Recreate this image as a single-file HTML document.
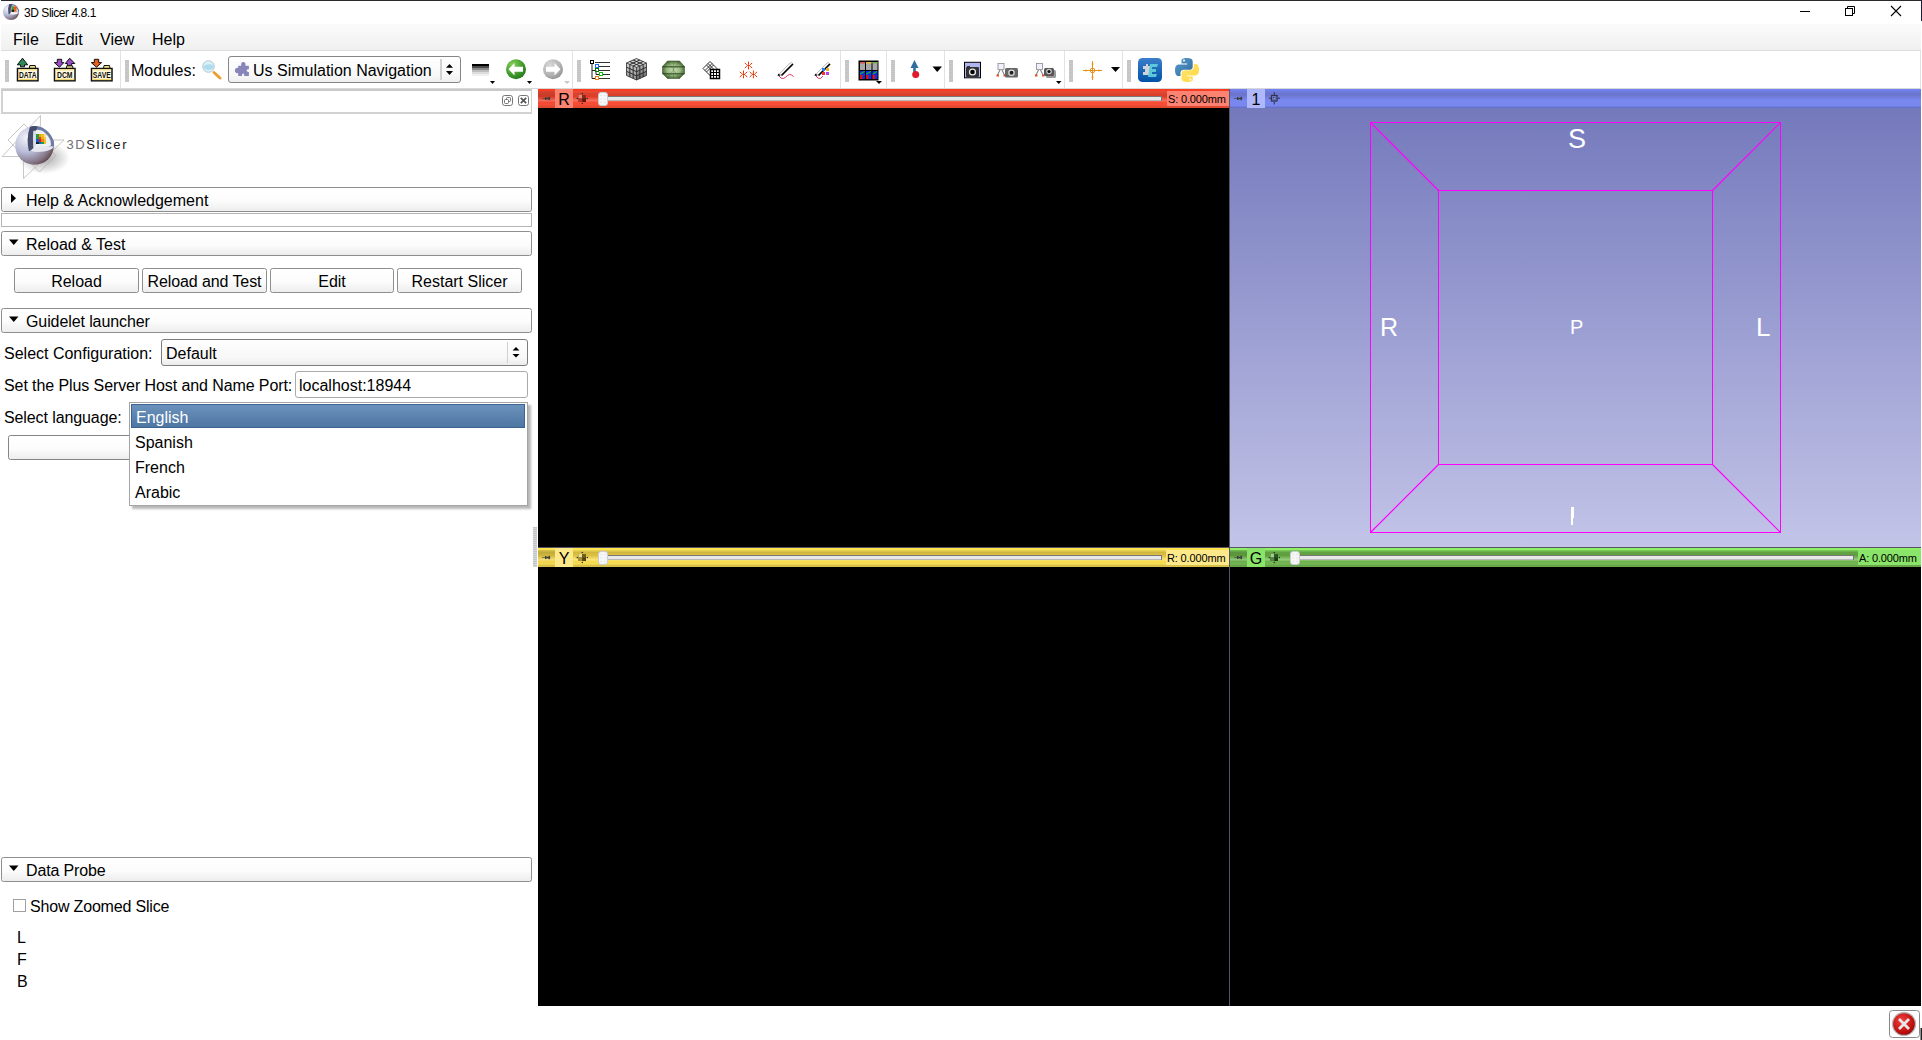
<!DOCTYPE html>
<html><head><meta charset="utf-8">
<style>
*{box-sizing:border-box;margin:0;padding:0}
html,body{width:1922px;height:1040px;overflow:hidden;background:#fff;font-family:"Liberation Sans",sans-serif;color:#000}
.a{position:absolute}
.t{position:absolute;white-space:pre;font-size:16px;line-height:22px}
#titlebar{left:1px;top:0;width:1921px;height:24px;background:#fff;border-top:1px solid #2a2a2a}
#menubar{left:1px;top:24px;width:1920px;height:27px;background:linear-gradient(#fbfbfb,#f0f0f0);border-bottom:1px solid #dcdcdc}
#toolbar{left:1px;top:51px;width:1920px;height:38px;background:#fff;border-bottom:1px solid #d8d8d8;border-right:1px solid #e2e2e2}
.sep{position:absolute;top:51px;width:1px;height:37px;background:#e3e3e3}
.grip{position:absolute;top:60px;width:4px;height:22px;background:repeating-linear-gradient(#c4c4c4 0 1px,#d4d4d4 1px 2px)}
.ctk{position:absolute;left:1px;width:531px;border:1px solid #8e8e8e;border-radius:2.5px;background:linear-gradient(#ffffff,#fcfcfc 55%,#ededed)}
.ctk .t{left:24px;top:1px}
.btn{position:absolute;border:1px solid #8e8e8e;border-radius:2.5px;background:linear-gradient(#ffffff,#fcfcfc 55%,#ededed);text-align:center}
.bar{position:absolute;height:19px}
.lbl{position:absolute;top:0;height:19px;font-size:16px;line-height:19px;text-align:center}
.mm{position:absolute;top:1px;height:17px;font-size:11px;line-height:17px;padding:0 2px;white-space:pre}
.view{position:absolute;background:#000}
.ax{position:absolute;color:#fff;white-space:pre;line-height:1}
</style></head><body>

<!-- Title bar -->
<div id="titlebar" class="a"></div>
<div class="a" style="left:1921px;top:0;width:1px;height:21px;background:#1b1f3a"></div>
<div class="t" style="left:24px;top:5px;font-size:12px;line-height:16px;letter-spacing:-0.45px;color:#000">3D Slicer 4.8.1</div>
<svg class="a" style="left:0;top:1px" width="24" height="23" viewBox="0 1 24 23">
 <defs><radialGradient id="tsph" cx="0.3" cy="0.3" r="0.85"><stop offset="0" stop-color="#f4f4fa"/><stop offset="0.45" stop-color="#b8bcd8"/><stop offset="0.8" stop-color="#807080"/><stop offset="1" stop-color="#502828"/></radialGradient></defs>
 <g transform="translate(11 12) scale(0.415) translate(-34.5 -145.5)">
 <circle cx="34.5" cy="145.5" r="19.3" fill="url(#tsph)"/>
 <path d="M30 127 Q44 122 53.8 141 L54 147.5 Q40 152.5 29 151 Q26 139 30 127 Z" fill="#6c7ca4"/>
 <path d="M34 130.5 Q44 127 50.5 140.5 L51 145.5 Q40 149 33 148 Q31 139 34 130.5 Z" fill="#eef0f4"/>
 <path d="M30 127 Q34 125 37.5 126.8 Q32.5 138 33.5 150.5 L29 151 Q26 139 30 127 Z" fill="#454c6c"/>
 <rect x="36" y="132" width="12" height="13" fill="#e07020"/>
 <rect x="36" y="132" width="5" height="13" fill="#30a050"/>
 <rect x="36" y="140" width="6" height="5" fill="#101820"/>
 <rect x="42" y="133" width="5" height="5" fill="#f05010"/>
 <path d="M33.5 148 Q42 145 53.8 146.5 Q52 150 44 151.5 Q36 152.5 30 151 Z" fill="#f0f0f6"/>
 </g>
</svg>
<svg class="a" style="left:1795px;top:0" width="120" height="22" viewBox="1795 0 120 22">
 <rect x="1800" y="11" width="10" height="1" fill="#000"/>
 <rect x="1845.5" y="8.5" width="7" height="7" fill="none" stroke="#000" stroke-width="1"/>
 <path d="M1847.5 8.5 V6.5 H1854.5 V13.5 H1852.5" fill="none" stroke="#000" stroke-width="1"/>
 <path d="M1891 6 L1901 16 M1901 6 L1891 16" stroke="#000" stroke-width="1.1"/>
</svg>

<!-- Menu bar -->
<div id="menubar" class="a"></div>
<div class="t" style="left:13px;top:29px">File</div>
<div class="t" style="left:55px;top:29px">Edit</div>
<div class="t" style="left:100px;top:29px">View</div>
<div class="t" style="left:152px;top:29px">Help</div>

<!-- Toolbar -->
<div id="toolbar" class="a"></div>
<svg class="a" style="left:0;top:51px" width="1922" height="38" viewBox="0 51 1922 38">
<defs>
 <linearGradient id="grip" x1="0" y1="0" x2="0" y2="1"><stop offset="0" stop-color="#c8c8c8"/><stop offset="1" stop-color="#c8c8c8"/></linearGradient>
 <pattern id="gp" width="4" height="2" patternUnits="userSpaceOnUse"><rect width="4" height="2" fill="#cbcbcb"/><rect width="4" height="1" fill="#c2c2c2"/></pattern>
 <radialGradient id="gback" cx="0.35" cy="0.3" r="0.8"><stop offset="0" stop-color="#8fd35a"/><stop offset="0.6" stop-color="#3f9a2c"/><stop offset="1" stop-color="#237018"/></radialGradient>
 <radialGradient id="gfwd" cx="0.35" cy="0.3" r="0.8"><stop offset="0" stop-color="#d8d8d8"/><stop offset="0.6" stop-color="#b4b4b4"/><stop offset="1" stop-color="#8c8c8c"/></radialGradient>
 <linearGradient id="wl" x1="0" y1="0" x2="0" y2="1"><stop offset="0" stop-color="#000"/><stop offset="0.2" stop-color="#202020"/><stop offset="0.4" stop-color="#707070"/><stop offset="0.7" stop-color="#c8c8c8"/><stop offset="1" stop-color="#f8f8f8"/></linearGradient>
 <radialGradient id="cube" cx="0.4" cy="0.35" r="0.7"><stop offset="0" stop-color="#c8c8c8"/><stop offset="1" stop-color="#404040"/></radialGradient>
 <radialGradient id="gem" cx="0.45" cy="0.4" r="0.6"><stop offset="0" stop-color="#b8d0a0"/><stop offset="1" stop-color="#4a6a38"/></radialGradient>
 <linearGradient id="ext" x1="0" y1="0" x2="0" y2="1"><stop offset="0" stop-color="#3b7fcb"/><stop offset="1" stop-color="#0052a6"/></linearGradient>
 <linearGradient id="pyb" x1="0" y1="0" x2="1" y2="1"><stop offset="0" stop-color="#5a9fd4"/><stop offset="1" stop-color="#306998"/></linearGradient>
 <linearGradient id="pyy" x1="0" y1="0" x2="1" y2="1"><stop offset="0" stop-color="#ffe873"/><stop offset="1" stop-color="#ffd43b"/></linearGradient>
</defs>
<!-- grips -->
<rect x="5" y="60" width="4" height="22" fill="url(#gp)"/>
<rect x="125" y="60" width="4" height="22" fill="url(#gp)"/>
<rect x="577" y="60" width="4" height="22" fill="url(#gp)"/>
<rect x="845" y="60" width="4" height="22" fill="url(#gp)"/>
<rect x="891" y="60" width="4" height="22" fill="url(#gp)"/>
<rect x="949" y="60" width="4" height="22" fill="url(#gp)"/>
<rect x="1069" y="60" width="4" height="22" fill="url(#gp)"/>
<rect x="1127" y="60" width="4" height="22" fill="url(#gp)"/>
<!-- separators -->
<rect x="120" y="51" width="1" height="37" fill="#e2e2e2"/>
<rect x="572" y="51" width="1" height="37" fill="#e2e2e2"/>
<rect x="840" y="51" width="1" height="37" fill="#e2e2e2"/>
<rect x="886" y="51" width="1" height="37" fill="#e2e2e2"/>
<rect x="944" y="51" width="1" height="37" fill="#e2e2e2"/>
<rect x="1064" y="51" width="1" height="37" fill="#e2e2e2"/>
<rect x="1122" y="51" width="1" height="37" fill="#e2e2e2"/>
<!-- DATA -->
<g>
 <path d="M17.3 64.8 L22.5 58.2 L27.7 64.8 L24.5 64.8 L24.5 66.8 L20.5 66.8 L20.5 64.8 Z" fill="#2e8b57" stroke="#111" stroke-width="1"/>
 <path d="M29.3 68.5 L29.8 65.5 L35.2 65.5 L35.8 68.5 Z" fill="#f3e28a" stroke="#111" stroke-width="1"/>
 <rect x="17.5" y="68.5" width="20.5" height="12.3" fill="#fff8dc" stroke="#111" stroke-width="1.5"/>
 <rect x="18.3" y="69.2" width="18.9" height="1.2" fill="#f6e08a"/>
 <rect x="18.3" y="78.8" width="18.9" height="1.3" fill="#f1d56a"/>
 <text x="27.75" y="78.3" font-size="9.5" font-family="Liberation Sans" font-weight="bold" text-anchor="middle" fill="#111" textLength="17.5" lengthAdjust="spacingAndGlyphs">DATA</text>
</g>
<!-- DCM -->
<g>
 <path d="M54.3 62.6 L57.3 62.6 L57.3 59.3 L61.7 59.3 L61.7 62.6 L63.8 62.6 L59.5 67.2 Z" fill="#9b4ac8" stroke="#111" stroke-width="1"/>
 <path d="M65.3 63.5 L69.7 58.2 L74.8 63.5 L71.6 63.5 L71.6 65.5 L67.4 65.5 L67.4 63.5 Z" fill="#9b4ac8" stroke="#111" stroke-width="1"/>
 <path d="M66.3 68.5 L66.8 65.8 L72.5 65.8 L73 68.5 Z" fill="#f3e28a" stroke="#111" stroke-width="1"/>
 <rect x="54.5" y="68.5" width="20.5" height="12.3" fill="#fff8dc" stroke="#111" stroke-width="1.5"/>
 <rect x="55.3" y="69.2" width="18.9" height="1.2" fill="#f6e08a"/>
 <rect x="55.3" y="78.8" width="18.9" height="1.3" fill="#f1d56a"/>
 <text x="64.75" y="78.3" font-size="9.5" font-family="Liberation Sans" font-weight="bold" text-anchor="middle" fill="#111" textLength="15.5" lengthAdjust="spacingAndGlyphs">DCM</text>
</g>
<!-- SAVE -->
<g>
 <path d="M91.3 62.6 L94.3 62.6 L94.3 59.3 L98.7 59.3 L98.7 62.6 L101.6 62.6 L96.5 67.2 Z" fill="#e8601a" stroke="#111" stroke-width="1"/>
 <path d="M103.5 68.5 L104 65.5 L109.5 65.5 L110 68.5 Z" fill="#f3e28a" stroke="#111" stroke-width="1"/>
 <rect x="91.5" y="68.5" width="20.5" height="12.3" fill="#fff8dc" stroke="#111" stroke-width="1.5"/>
 <rect x="92.3" y="69.2" width="18.9" height="1.2" fill="#f6e08a"/>
 <rect x="92.3" y="78.8" width="18.9" height="1.3" fill="#f1d56a"/>
 <text x="101.75" y="78.3" font-size="9.5" font-family="Liberation Sans" font-weight="bold" text-anchor="middle" fill="#111" textLength="18" lengthAdjust="spacingAndGlyphs">SAVE</text>
</g>
<!-- magnifier -->
<circle cx="208.5" cy="66.5" r="5.8" fill="#d8f0f8" stroke="#b8c8d0" stroke-width="1"/>
<path d="M203.5 66 Q208 63 213.5 65.5 L213.5 68 Q208 72 203.5 68 Z" fill="#aedcec"/>
<line x1="214" y1="72.5" x2="220" y2="78" stroke="#e8a030" stroke-width="3" stroke-linecap="round"/>
<!-- W/L -->
<g shape-rendering="crispEdges"><rect x="472" y="64" width="17" height="2" fill="#000"/><rect x="472" y="66" width="17" height="2" fill="#4a4a4a"/><rect x="472" y="68" width="17" height="2" fill="#8a8a8a"/><rect x="472" y="70" width="17" height="2" fill="#bcbcbc"/><rect x="472" y="72" width="17" height="2" fill="#dcdcdc"/><rect x="472" y="74" width="17" height="2" fill="#f0f0f0"/></g>
<path d="M490 81 L495 81 L492.5 84 Z" fill="#000"/>
<!-- back -->
<circle cx="516" cy="69.2" r="10" fill="url(#gback)"/>
<path d="M508.5 69.2 L514.5 63 L514.5 66.7 L523 66.7 L523 71.7 L514.5 71.7 L514.5 75.4 Z" fill="#fff"/>
<path d="M527 81 L532 81 L529.5 84 Z" fill="#000"/>
<!-- forward -->
<circle cx="553" cy="69.2" r="10" fill="url(#gfwd)"/>
<path d="M560.5 69.2 L554.5 63 L554.5 66.7 L546 66.7 L546 71.7 L554.5 71.7 L554.5 75.4 Z" fill="#fff"/>
<path d="M564 81 L570 81 L567 84 Z" fill="#c8c8c8"/>
<!-- data tree -->
<g fill="none" stroke-width="1">
 <path d="M592 63 V78.5 H596 M592 70.5 H596 M596 70.5 V74.5 H600" stroke="#222"/>
 <rect x="590.5" y="60.5" width="3" height="3" stroke="#000"/>
 <rect x="595.5" y="64.5" width="3" height="3" stroke="#1f6fff"/>
 <rect x="595.5" y="68.5" width="3" height="3" stroke="#0a7a0a"/>
 <rect x="599.5" y="72.5" width="3" height="3" stroke="#10c010"/>
 <rect x="595.5" y="76.5" width="3" height="3" stroke="#f08010"/>
 <path d="M595 62.5 H610 M599 66.5 H610 M599 70.5 H610 M603 74.5 H610 M599 78.5 H610" stroke="#333"/>
</g>
<!-- cube -->
<defs>
 <linearGradient id="cl" x1="0" y1="0" x2="0" y2="1"><stop offset="0" stop-color="#d8d8d8"/><stop offset="1" stop-color="#8a8a8a"/></linearGradient>
 <linearGradient id="cr" x1="0" y1="0" x2="0" y2="1"><stop offset="0" stop-color="#c8c8c8"/><stop offset="1" stop-color="#5a5a5a"/></linearGradient>
 <radialGradient id="gem2" cx="0.5" cy="0.5" r="0.55"><stop offset="0" stop-color="#c8e0b0"/><stop offset="0.55" stop-color="#98b880"/><stop offset="1" stop-color="#3a5a2a"/></radialGradient>
</defs>
<g>
 <path d="M626.5 63 L636.5 58.5 L646.5 63 L636.5 67.5 Z" fill="#d0d0d0"/>
 <path d="M626.5 63 L636.5 67.5 L636.5 80 L626.5 75.5 Z" fill="url(#cl)"/>
 <path d="M636.5 67.5 L646.5 63 L646.5 75.5 L636.5 80 Z" fill="url(#cr)"/>
 <path d="M629.83 61.50 L639.83 66.00 M629.83 64.50 L639.83 60.00 M629.83 64.50 L629.83 77.00 M626.50 67.17 L636.50 71.67 M639.83 66.00 L639.83 78.50 M636.50 71.67 L646.50 67.17 M633.17 60.00 L643.17 64.50 M633.17 66.00 L643.17 61.50 M633.17 66.00 L633.17 78.50 M626.50 71.33 L636.50 75.83 M643.17 64.50 L643.17 77.00 M636.50 75.83 L646.50 71.33 " stroke="#2e2e2e" stroke-width="1" fill="none"/>
 <path d="M626.5 63 L636.5 58.5 L646.5 63 L646.5 75.5 L636.5 80 L626.5 75.5 Z M626.5 63 L636.5 67.5 L646.5 63 M636.5 67.5 V80" stroke="#2a2a2a" stroke-width="0.8" fill="none"/>
</g>
<!-- gem -->
<g>
 <path d="M667.5 61 L679.5 61 L684.5 66.5 L684.5 73.5 L679.5 78.5 L667.5 78.5 L662.5 73.5 L662.5 66.5 Z" fill="url(#gem2)"/>
 <rect x="662.5" y="66" width="22" height="1.5" fill="#2a4a1c" opacity="0.7"/>
 <rect x="662.5" y="73" width="22" height="1.5" fill="#2a4a1c" opacity="0.7"/>
 <path d="M667.5 61 L679.5 78.5 M679.5 61 L667.5 78.5 M673.5 61 V78.5" stroke="#3c5a2c" stroke-width="0.5" fill="none" opacity="0.6"/>
 <path d="M667.5 61 L679.5 61 L684.5 66.5 L684.5 73.5 L679.5 78.5 L667.5 78.5 L662.5 73.5 L662.5 66.5 Z" fill="none" stroke="#3a5a2a" stroke-width="0.6"/>
</g>
<!-- transforms -->
<g fill="none" stroke="#000">
 <path d="M710 61.5 L717 68.5 L710 75.5 L703 68.5 Z" stroke-width="0.8"/>
 <path d="M706.5 65 L713.5 72 M713.5 65 L706.5 72 M708 63.5 L715 70.5 M712 63.5 L705 70.5" stroke-width="0.8"/>
 <rect x="710.5" y="69.5" width="9" height="9" fill="#fff" stroke-width="1.5"/>
 <path d="M713.5 69.5 V78.5 M716.5 69.5 V78.5 M710.5 72.5 H719.5 M710.5 75.5 H719.5" stroke-width="1"/>
</g>
<!-- markups -->
<g stroke="#e83000" stroke-width="1.0" fill="#e83000" stroke-linecap="round"><circle cx="748.5" cy="65.5" r="0.8"/><path d="M748.5 62.0 V63.7 M748.5 67.3 V69.0 M745.1 63.2 L746.5 64.5 M751.9 63.2 L750.5 64.5 M745.1 67.8 L746.5 66.5 M751.9 67.8 L750.5 66.5" /><circle cx="743.5" cy="74.4" r="0.8"/><path d="M743.5 70.9 V72.60000000000001 M743.5 76.2 V77.9 M740.1 72.10000000000001 L741.5 73.4 M746.9 72.10000000000001 L745.5 73.4 M740.1 76.7 L741.5 75.4 M746.9 76.7 L745.5 75.4" /><circle cx="753.4" cy="74.4" r="0.8"/><path d="M753.4 70.9 V72.60000000000001 M753.4 76.2 V77.9 M750.0 72.10000000000001 L751.4 73.4 M756.8 72.10000000000001 L755.4 73.4 M750.0 76.7 L751.4 75.4 M756.8 76.7 L755.4 75.4" /></g>
<!-- editor pen -->
<g>
 <path d="M778.5 74.5 L790 63 Q791.5 62 792.5 63.5 L781 75 Z" fill="#f4f4f4" stroke="#999" stroke-width="0.6"/>
 <path d="M781.5 75.5 L793 64" stroke="#000" stroke-width="1.6"/>
 <path d="M777.5 76 L778.5 73.5 L780.5 75.5 Z" fill="#000"/>
 <path d="M779 76 Q781 79 783.5 78.5 Q785.5 77.5 787.5 75.5 Q789.5 73.5 791.5 75 L793.5 76.5" fill="none" stroke="#e03060" stroke-width="1"/>
</g>
<!-- segment editor -->
<g>
 <path d="M815.5 74.5 L827 63 Q828.5 62 829.5 63.5 L818 75 Z" fill="#f4f4f4" stroke="#999" stroke-width="0.6"/>
 <path d="M818.5 75.5 L830 64" stroke="#000" stroke-width="1.6"/>
 <path d="M814.5 76 L815.5 73.5 L817.5 75.5 Z" fill="#000"/>
 <path d="M816 76 Q818 79 820.5 78.5 L823 76" fill="none" stroke="#e03060" stroke-width="1"/>
 <rect x="822" y="68" width="3" height="3" fill="#2a7ef0"/>
 <rect x="826" y="68" width="3" height="3" fill="#f0b020"/>
 <rect x="822" y="72" width="3" height="3" fill="#f03030"/>
 <rect x="826" y="72" width="3" height="3" fill="#b040f0"/>
</g>
<!-- layout -->
<g>
 <rect x="858.5" y="60.5" width="20" height="20" fill="#000"/>
 <rect x="860" y="62" width="5" height="8" fill="#a8a8a8"/><rect x="860" y="62" width="5" height="1.5" fill="#e05050"/>
 <rect x="866" y="62" width="5.5" height="8" fill="#a8a8a8"/><rect x="866" y="62" width="5.5" height="1.5" fill="#e0c040"/>
 <rect x="872.5" y="62" width="5" height="8" fill="#a8a8a8"/><rect x="872.5" y="62" width="5" height="1.5" fill="#70b050"/>
 <g><rect x="860" y="71" width="5" height="8" fill="#1030e0"/><rect x="860" y="75" width="2.5" height="4" fill="#e01010"/><path d="M860 74 L864.5 71.5" stroke="#10d010" stroke-width="1"/></g>
 <g><rect x="866" y="71" width="5.5" height="8" fill="#1030e0"/><rect x="866" y="75" width="2.5" height="4" fill="#e01010"/><path d="M866 74 L871 71.5" stroke="#10d010" stroke-width="1"/></g>
 <g><rect x="872.5" y="71" width="5" height="8" fill="#1030e0"/><rect x="872.5" y="75" width="2.5" height="4" fill="#e01010"/><path d="M872.5 74 L877 71.5" stroke="#10d010" stroke-width="1"/></g>
 <path d="M876 81 L882 81 L879 84 Z" fill="#000"/>
</g>
<!-- mouse mode -->
<g>
 <path d="M910.5 68 L914.5 60 L918.5 68 L915.8 68 L915.8 72.5 L913.2 72.5 L913.2 68 Z" fill="#2f6ea0"/>
 <circle cx="915.7" cy="74.5" r="3.5" fill="#e01a2a"/>
 <path d="M932.5 66.5 L942 66.5 L937.25 72 Z" fill="#000"/>
</g>
<!-- screenshot -->
<g>
 <rect x="964.5" y="62.3" width="16" height="15.5" fill="#b0b6f0" stroke="#000" stroke-width="1"/>
 <rect x="966" y="67" width="13" height="10" rx="1" fill="#333"/>
 <rect x="967" y="66" width="3" height="1.5" fill="#333"/>
 <circle cx="972.5" cy="72" r="3.6" fill="#eee"/><circle cx="972.5" cy="72" r="2.3" fill="#000"/>
</g>
<g>
 <rect x="998" y="63.5" width="6" height="6" fill="#f0f0ff" stroke="#888" stroke-width="0.8"/>
 <path d="M1000 70 L997.5 75 M1002 70 L1004.5 75" stroke="#444" stroke-width="0.8"/>
 <rect x="996.5" y="74.5" width="2.5" height="2" fill="#e05020"/><rect x="1003.5" y="74.5" width="2.5" height="2" fill="#e05020"/>
 <rect x="1005" y="68" width="13" height="9.5" rx="1.5" fill="#666"/>
 <circle cx="1011.5" cy="72.8" r="3.3" fill="#ddd"/><circle cx="1011.5" cy="72.8" r="2" fill="#222"/>
</g>
<g>
 <rect x="1036.5" y="63.5" width="6" height="6" fill="#f0f0ff" stroke="#888" stroke-width="0.8"/>
 <path d="M1038.5 70 L1036 75 M1040.5 70 L1043 75" stroke="#444" stroke-width="0.8"/>
 <rect x="1035" y="74.5" width="2.5" height="2" fill="#e05020"/><rect x="1042" y="74.5" width="2.5" height="2" fill="#e05020"/>
 <rect x="1046" y="70" width="10" height="8" rx="1.5" fill="#999"/>
 <rect x="1044" y="68" width="10" height="8" rx="1.5" fill="#555"/>
 <circle cx="1049" cy="71.5" r="2.8" fill="#ccc"/><circle cx="1049" cy="71.5" r="1.6" fill="#111"/>
 <path d="M1056 81 L1061.5 81 L1058.75 84 Z" fill="#000"/>
</g>
<!-- crosshair -->
<g stroke="#e8901a" stroke-width="1" fill="none">
 <path d="M1083 70.5 H1102 M1092.5 61 V80"/>
 <circle cx="1092.5" cy="70.5" r="2.3"/>
 <path d="M1086 69.5 V71.5 M1099 69.5 V71.5 M1091.5 64 H1093.5 M1091.5 77 H1093.5"/>
</g>
<path d="M1111 67 L1120 67 L1115.5 72 Z" fill="#000"/>
<!-- extension manager -->
<rect x="1138" y="58" width="24" height="24" rx="4.5" fill="url(#ext)"/>
<path d="M1143 66 h3 v-2 h2 v2 h2 v9 h-7 v-3 h2 v-3 h-2 z" fill="#d0d4d8"/>
<path d="M1150 64 h8 l-1 3 h-5 v2 h4 v3 h-4 v2 h5 l-1 3 h-8 z" fill="#5ac8d8"/>
<!-- python -->
<g>
 <path d="M1187 58 C1181 58 1181.5 60.5 1181.5 60.5 L1181.5 63.5 L1187.2 63.5 L1187.2 64.5 L1179 64.5 C1179 64.5 1175 64 1175 70.2 C1175 76.3 1178.5 76 1178.5 76 L1180.5 76 L1180.5 73.2 C1180.5 73.2 1180.4 69.8 1183.8 69.8 L1189.5 69.8 C1189.5 69.8 1192.7 69.8 1192.7 66.7 L1192.7 61.5 C1192.7 61.5 1193.2 58 1187 58 Z" fill="url(#pyb)"/>
 <path d="M1187.2 82 C1193.2 82 1192.7 79.5 1192.7 79.5 L1192.7 76.5 L1187 76.5 L1187 75.5 L1195.2 75.5 C1195.2 75.5 1199 76 1199 69.8 C1199 63.7 1195.7 64 1195.7 64 L1193.7 64 L1193.7 66.8 C1193.7 66.8 1193.8 70.2 1190.4 70.2 L1184.7 70.2 C1184.7 70.2 1181.5 70.2 1181.5 73.3 L1181.5 78.5 C1181.5 78.5 1181 82 1187.2 82 Z" fill="url(#pyy)"/>
 <circle cx="1184" cy="60.6" r="1" fill="#fff"/><circle cx="1190.3" cy="79.4" r="1" fill="#fff"/>
</g>
</svg>


<div class="t" style="left:131px;top:60px">Modules:</div>
<div class="a" style="left:228px;top:56px;width:233px;height:27px;border:1.3px solid #858585;border-radius:3px;background:linear-gradient(#ffffff,#f8f8f8 70%,#efefef)"></div>
<div class="a" style="left:440px;top:59px;width:2px;height:21px;background:#d2d2d2"></div>
<svg class="a" style="left:440px;top:56px" width="20" height="27" viewBox="440 56 20 27"><path d="M446 67.8 L449.5 64 L453 67.8 Z M446 71 L449.5 75 L453 71 Z" fill="#000"/></svg>
<svg class="a" style="left:233px;top:60px" width="18" height="18" viewBox="233 60 18 18">
 <path d="M238.2 65.7 H241.2 Q240.6 62.2 243.3 62 Q246 62.2 245.5 65.7 H248.9 V69.2 Q246.6 69 246.6 70.6 Q246.6 72.1 248.9 71.9 V75.9 H244.2 Q244.5 73.6 243.1 73.6 Q241.8 73.6 242 75.9 H238.2 V73.2 Q235 73.6 234.9 70.5 Q235 67.4 238.2 67.8 Z" fill="#8886b8"/>
</svg>
<div class="t" style="left:253px;top:60px">Us Simulation Navigation</div>

<!-- Left panel -->
<div class="a" style="left:1px;top:89px;width:531px;height:25px;border:2px solid #d2d2d2;border-right-width:1px;border-top-color:#c8c8c8;background:#fff"></div>
<svg class="a" style="left:500px;top:93px" width="32" height="15" viewBox="500 93 32 15">
 <rect x="502.5" y="95.5" width="10" height="10" rx="2.2" fill="none" stroke="#666" stroke-width="0.9"/>
 <rect x="506.5" y="97.5" width="4" height="4" rx="1" fill="none" stroke="#666" stroke-width="0.9"/>
 <rect x="504.5" y="99.5" width="4" height="4" rx="1" fill="#fff" stroke="#666" stroke-width="0.9"/>
 <rect x="518.5" y="95.5" width="10" height="10" rx="2.2" fill="none" stroke="#666" stroke-width="0.9"/>
 <path d="M520.8 97.8 L526.2 103.2 M526.2 97.8 L520.8 103.2" stroke="#555" stroke-width="1.7"/>
</svg>

<!-- logo -->
<svg class="a" style="left:0;top:112px" width="140" height="70" viewBox="0 112 140 70">
 <defs>
  <radialGradient id="lsph" cx="0.3" cy="0.3" r="0.85"><stop offset="0" stop-color="#f4f4fa"/><stop offset="0.45" stop-color="#b8bcd8"/><stop offset="0.8" stop-color="#807080"/><stop offset="1" stop-color="#502828"/></radialGradient>
  <radialGradient id="lsh" cx="0.5" cy="0.5" r="0.5"><stop offset="0" stop-color="#000" stop-opacity="0.35"/><stop offset="1" stop-color="#000" stop-opacity="0"/></radialGradient>
 </defs>
 <ellipse cx="44" cy="158" rx="26" ry="16" fill="url(#lsh)"/>
 <g fill="none" stroke="#b0b0b0" stroke-width="0.7">
  <path d="M40.5 115.5 L2.2 156.5 L40 156.5 Z"/>
  <path d="M24 124 L8 140 L39.5 172 L56 155.5 Z"/>
  <path d="M23.5 178.5 L64 140 L23.5 140 Z"/>
 </g>
 <circle cx="34.5" cy="145.5" r="19.3" fill="url(#lsph)"/>
 <path d="M30 127 Q44 122 53.8 141 L54 147.5 Q40 152.5 29 151 Q26 139 30 127 Z" fill="#6c7ca4"/>
 <path d="M34 130.5 Q44 127 50.5 140.5 L51 145.5 Q40 149 33 148 Q31 139 34 130.5 Z" fill="#eef0f4"/>
 <path d="M30 127 Q34 125 37.5 126.8 Q32.5 138 33.5 150.5 L29 151 Q26 139 30 127 Z" fill="#454c6c"/>
 <path d="M33.2 131 Q36 130 36 131 L36 146 L33.5 147 Q32.5 139 33.2 131 Z" fill="#d8dce4"/>
 <g shape-rendering="crispEdges">
 <rect x="36" y="134" width="2.5" height="2.5" fill="#20a040"/><rect x="38.5" y="134" width="2.5" height="2.5" fill="#f0a010"/><rect x="41" y="134" width="2.5" height="2.5" fill="#f0c020"/><rect x="43.5" y="134" width="2.5" height="2.5" fill="#f0e0a0"/>
 <rect x="36" y="136.5" width="2.5" height="2.5" fill="#20a040"/><rect x="38.5" y="136.5" width="2.5" height="2.5" fill="#f04010"/><rect x="41" y="136.5" width="2.5" height="2.5" fill="#f0b010"/><rect x="43.5" y="136.5" width="2.5" height="2.5" fill="#f0d060"/>
 <rect x="36" y="139" width="2.5" height="2.5" fill="#1060e0"/><rect x="38.5" y="139" width="2.5" height="2.5" fill="#e02010"/><rect x="41" y="139" width="2.5" height="2.5" fill="#f08010"/><rect x="43.5" y="139" width="2.5" height="2.5" fill="#f0c030"/>
 <rect x="36" y="141.5" width="2.5" height="2.5" fill="#202020"/><rect x="38.5" y="141.5" width="2.5" height="2.5" fill="#1060e0"/><rect x="41" y="141.5" width="2.5" height="2.5" fill="#20a040"/><rect x="43.5" y="141.5" width="2.5" height="2.5" fill="#f0c030"/>
 </g>
 <path d="M33.5 148 Q42 145 53.8 146.5 Q52 150 44 151.5 Q36 152.5 30 151 Z" fill="#e6e6ee"/>
 <text x="66.5" y="149" font-family="Liberation Sans" font-size="13" letter-spacing="1.55" fill="#707070">3D<tspan fill="#151515">Slicer</tspan></text>
</svg>

<!-- collapsible sections -->
<div class="ctk" style="top:187px;height:25px"><div class="t" style="top:2px">Help &amp; Acknowledgement</div></div>
<svg class="a" style="left:9px;top:192px" width="10" height="12" viewBox="9 192 10 12"><path d="M11 193.5 L16 198.3 L11 203 Z" fill="#000"/></svg>
<div class="a" style="left:1px;top:213px;width:531px;height:14px;border:1px solid #b4b4b4"></div>
<div class="ctk" style="top:231px;height:25px"><div class="t" style="top:2px">Reload &amp; Test</div></div>
<svg class="a" style="left:8px;top:237px" width="12" height="10" viewBox="8 237 12 10"><path d="M9 239.5 L18.5 239.5 L13.75 245 Z" fill="#000"/></svg>

<div class="btn" style="left:14px;top:268px;width:125px;height:25px"><span class="t" style="position:static;line-height:25px">Reload</span></div>
<div class="btn" style="left:142px;top:268px;width:125px;height:25px"><span class="t" style="position:static;line-height:25px;letter-spacing:-0.1px">Reload and Test</span></div>
<div class="btn" style="left:270px;top:268px;width:124px;height:25px"><span class="t" style="position:static;line-height:25px">Edit</span></div>
<div class="btn" style="left:397px;top:268px;width:125px;height:25px"><span class="t" style="position:static;line-height:25px">Restart Slicer</span></div>

<div class="ctk" style="top:308px;height:25px"><div class="t" style="top:2px;letter-spacing:-0.1px">Guidelet launcher</div></div>
<svg class="a" style="left:8px;top:314px" width="12" height="10" viewBox="8 314 12 10"><path d="M9 316.5 L18.5 316.5 L13.75 322 Z" fill="#000"/></svg>

<div class="t" style="left:4px;top:343px">Select Configuration:</div>
<div class="a" style="left:161px;top:339px;width:367px;height:27px;border:1px solid #7c7c7c;border-radius:3px;background:linear-gradient(#fefefe,#f8f8f8 70%,#ececec)"></div>
<div class="t" style="left:166px;top:343px">Default</div>
<div class="a" style="left:507px;top:342px;width:1px;height:21px;background:#d0d0d0"></div>
<svg class="a" style="left:510px;top:342px" width="14" height="20" viewBox="510 342 14 20"><path d="M512.5 350.5 L516 347 L519.5 350.5 Z M512.5 354 L516 357.5 L519.5 354 Z" fill="#000"/></svg>

<div class="t" style="left:4px;top:375px;letter-spacing:-0.09px">Set the Plus Server Host and Name Port:</div>
<div class="a" style="left:295px;top:371px;width:233px;height:27px;border:1px solid #aaaaaa;border-radius:3px;background:#fff"></div>
<div class="t" style="left:299px;top:375px">localhost:18944</div>

<div class="t" style="left:4px;top:407px;letter-spacing:-0.1px">Select language:</div>
<div class="a" style="left:8px;top:435px;width:130px;height:25px;border:1px solid #858585;border-radius:2.5px;background:linear-gradient(#ffffff,#fcfcfc 55%,#ededed)"></div>

<!-- popup -->
<div class="a" style="left:132px;top:405px;width:399px;height:104px;background:rgba(0,0,0,0.28);filter:blur(1.2px)"></div>
<div class="a" style="left:129px;top:402px;width:399px;height:104px;border:1px solid #a4a4a4;background:#fff"></div>
<div class="a" style="left:131px;top:404px;width:394px;height:24px;background:linear-gradient(#6a92bc,#4e76a2);border:1px solid #3d6590"></div>
<div class="t" style="left:136px;top:407px;color:#fff">English</div>
<div class="t" style="left:135px;top:432px">Spanish</div>
<div class="t" style="left:135px;top:457px">French</div>
<div class="t" style="left:135px;top:482px">Arabic</div>

<!-- data probe -->
<div class="ctk" style="top:857px;height:25px"><div class="t" style="top:2px;letter-spacing:-0.15px">Data Probe</div></div>
<svg class="a" style="left:8px;top:863px" width="12" height="10" viewBox="8 863 12 10"><path d="M9 865.5 L18.5 865.5 L13.75 871 Z" fill="#000"/></svg>
<div class="a" style="left:13px;top:899px;width:13px;height:13px;border:1px solid #a0a0a0;background:#fff"></div>
<div class="t" style="left:30px;top:896px;letter-spacing:-0.18px">Show Zoomed Slice</div>
<div class="t" style="left:17px;top:927px">L</div>
<div class="t" style="left:17px;top:949px">F</div>
<div class="t" style="left:17px;top:971px">B</div>

<!-- splitter handle -->
<div class="a" style="left:533px;top:527px;width:4px;height:40px;background:repeating-linear-gradient(#c6c6c6 0 1px,#d6d6d6 1px 2px)"></div>

<!-- Views -->
<div class="view" style="left:538px;top:108px;width:691px;height:439px"></div>
<div class="a" style="left:1229px;top:89px;width:1px;height:917px;background:#555566"></div>
<div class="a" style="left:1230px;top:108px;width:691px;height:439px;background:linear-gradient(#7479bc,#c3c4e8)"></div>
<div class="a" style="left:538px;top:547px;width:1383px;height:1px;background:#555566"></div>
<div class="view" style="left:538px;top:567px;width:691px;height:439px"></div>
<div class="view" style="left:1230px;top:567px;width:691px;height:439px"></div>

<!--BARS-->
<div class="a" style="left:538px;top:89px;width:691px;height:19px;background:linear-gradient(#f83c22 0,#f83c22 1.5px,#ea4a34 2.5px,#d84430 4.5px,#e03c26 7px,#e03c26 7.5px,#f87464 12px,#f84c34 13px,#fa4c36 16px,#e04830 17.5px,#e04830 19px)"></div>
<div class="a" style="left:538px;top:91px;width:17px;height:17px;background:linear-gradient(rgba(0,0,0,0.09),rgba(0,0,0,0.03) 60%,rgba(0,0,0,0.0))"></div>
<div class="a" style="left:555px;top:89px;width:18px;height:19px;background:#fc8272"></div>
<div class="t" style="left:555px;top:90px;width:18px;height:19px;line-height:20px;text-align:center">R</div>
<svg class="a" style="left:538px;top:89px" width="691" height="19" viewBox="538 89 691 19">
 <g fill="#3c3c3c"><rect x="542" y="98" width="3" height="1" opacity="0.6"/><rect x="545" y="97" width="1.3" height="3"/><rect x="546" y="97.8" width="2.5" height="1.5"/><rect x="548.3" y="96.8" width="1.8" height="3.4" rx="0.8"/></g>
 <rect x="578.5" y="95" width="7.5" height="7" fill="#601810"/>
 <rect x="578.5" y="95" width="3.7" height="3.5" fill="#e88878"/>
 <rect x="582.2" y="95" width="3.8" height="3.5" fill="#902818"/>
 <rect x="578.5" y="98.5" width="3.7" height="3.5" fill="#b83828"/>
 <g fill="#303030"><circle cx="582.3" cy="93.5" r="0.8"/><circle cx="582.3" cy="103.5" r="0.8"/><circle cx="577.3" cy="98.5" r="0.8"/><circle cx="587.3" cy="98.5" r="0.8"/></g>
 <rect x="607.5" y="96.5" width="554" height="4" fill="#e8e8e8" stroke="#787878" stroke-width="1"/>
 <rect x="608" y="100" width="553" height="1" fill="#b8b8b8"/>
 <rect x="598.5" y="92.5" width="9" height="13" rx="2.5" fill="#f6f6f6" stroke="#c8ccd4" stroke-width="1"/>
 <g fill="#cfcfcf"><circle cx="601" cy="95.5" r="0.5"/><circle cx="605" cy="95.5" r="0.5"/><circle cx="601" cy="99" r="0.5"/><circle cx="605" cy="99" r="0.5"/><circle cx="601" cy="102.5" r="0.5"/><circle cx="605" cy="102.5" r="0.5"/></g>
</svg>
<div class="a" style="left:1167px;top:91px;width:62px;height:15px;background:#fc8272"></div>
<div class="t" style="left:1168px;top:91px;height:15px;font-size:11px;line-height:16px;letter-spacing:-0.15px">S: 0.000mm</div>
<div class="a" style="left:538px;top:548px;width:691px;height:19px;background:linear-gradient(#ffe44c 0,#ffe44c 1.5px,#e8d050 2.5px,#d0b840 4.5px,#dcc040 7px,#dcc040 7.5px,#fde880 12px,#f4da50 13px,#f6dc52 16px,#d8c048 17.5px,#d8c048 19px)"></div>
<div class="a" style="left:538px;top:550px;width:17px;height:17px;background:linear-gradient(rgba(0,0,0,0.09),rgba(0,0,0,0.03) 60%,rgba(0,0,0,0.0))"></div>
<div class="a" style="left:555px;top:548px;width:18px;height:19px;background:#fde98a"></div>
<div class="t" style="left:555px;top:549px;width:18px;height:19px;line-height:20px;text-align:center">Y</div>
<svg class="a" style="left:538px;top:548px" width="691" height="19" viewBox="538 548 691 19">
 <g fill="#3c3c3c"><rect x="542" y="557" width="3" height="1" opacity="0.6"/><rect x="545" y="556" width="1.3" height="3"/><rect x="546" y="556.8" width="2.5" height="1.5"/><rect x="548.3" y="555.8" width="1.8" height="3.4" rx="0.8"/></g>
 <rect x="578.5" y="554" width="7.5" height="7" fill="#504010"/>
 <rect x="578.5" y="554" width="3.7" height="3.5" fill="#e8e090"/>
 <rect x="582.2" y="554" width="3.8" height="3.5" fill="#706018"/>
 <rect x="578.5" y="557.5" width="3.7" height="3.5" fill="#a89030"/>
 <g fill="#303030"><circle cx="582.3" cy="552.5" r="0.8"/><circle cx="582.3" cy="562.5" r="0.8"/><circle cx="577.3" cy="557.5" r="0.8"/><circle cx="587.3" cy="557.5" r="0.8"/></g>
 <rect x="607.5" y="555.5" width="554" height="4" fill="#e8e8e8" stroke="#787878" stroke-width="1"/>
 <rect x="608" y="559" width="553" height="1" fill="#b8b8b8"/>
 <rect x="598.5" y="551.5" width="9" height="13" rx="2.5" fill="#f6f6f6" stroke="#c8ccd4" stroke-width="1"/>
 <g fill="#cfcfcf"><circle cx="601" cy="554.5" r="0.5"/><circle cx="605" cy="554.5" r="0.5"/><circle cx="601" cy="558" r="0.5"/><circle cx="605" cy="558" r="0.5"/><circle cx="601" cy="561.5" r="0.5"/><circle cx="605" cy="561.5" r="0.5"/></g>
</svg>
<div class="a" style="left:1166px;top:550px;width:63px;height:15px;background:#fde98a"></div>
<div class="t" style="left:1167px;top:550px;height:15px;font-size:11px;line-height:16px;letter-spacing:-0.15px">R: 0.000mm</div>
<div class="a" style="left:1230px;top:548px;width:691px;height:19px;background:linear-gradient(#90f068 0,#90f068 1.5px,#78c858 2.5px,#64a044 4.5px,#60a03c 7px,#60a03c 7.5px,#98d080 12px,#70b050 13px,#74b854 16px,#68a448 17.5px,#68a448 19px)"></div>
<div class="a" style="left:1230px;top:550px;width:17px;height:17px;background:linear-gradient(rgba(0,0,0,0.09),rgba(0,0,0,0.03) 60%,rgba(0,0,0,0.0))"></div>
<div class="a" style="left:1247px;top:548px;width:18px;height:19px;background:#8ae46a"></div>
<div class="t" style="left:1247px;top:549px;width:18px;height:19px;line-height:20px;text-align:center">G</div>
<svg class="a" style="left:1230px;top:548px" width="691" height="19" viewBox="1230 548 691 19">
 <g fill="#3c3c3c"><rect x="1234" y="557" width="3" height="1" opacity="0.6"/><rect x="1237" y="556" width="1.3" height="3"/><rect x="1238" y="556.8" width="2.5" height="1.5"/><rect x="1240.3" y="555.8" width="1.8" height="3.4" rx="0.8"/></g>
 <rect x="1270.5" y="554" width="7.5" height="7" fill="#1c3a14"/>
 <rect x="1270.5" y="554" width="3.7" height="3.5" fill="#a0d090"/>
 <rect x="1274.2" y="554" width="3.8" height="3.5" fill="#285820"/>
 <rect x="1270.5" y="557.5" width="3.7" height="3.5" fill="#508840"/>
 <g fill="#303030"><circle cx="1274.3" cy="552.5" r="0.8"/><circle cx="1274.3" cy="562.5" r="0.8"/><circle cx="1269.3" cy="557.5" r="0.8"/><circle cx="1279.3" cy="557.5" r="0.8"/></g>
 <rect x="1299.5" y="555.5" width="554" height="4" fill="#e8e8e8" stroke="#787878" stroke-width="1"/>
 <rect x="1300" y="559" width="553" height="1" fill="#b8b8b8"/>
 <rect x="1290.5" y="551.5" width="9" height="13" rx="2.5" fill="#f6f6f6" stroke="#c8ccd4" stroke-width="1"/>
 <g fill="#cfcfcf"><circle cx="1293" cy="554.5" r="0.5"/><circle cx="1297" cy="554.5" r="0.5"/><circle cx="1293" cy="558" r="0.5"/><circle cx="1297" cy="558" r="0.5"/><circle cx="1293" cy="561.5" r="0.5"/><circle cx="1297" cy="561.5" r="0.5"/></g>
</svg>
<div class="a" style="left:1858px;top:550px;width:63px;height:15px;background:#8ae46a"></div>
<div class="t" style="left:1859px;top:550px;height:15px;font-size:11px;line-height:16px;letter-spacing:-0.15px">A: 0.000mm</div>
<!--/BARS-->
<div class="a" style="left:1230px;top:89px;width:691px;height:19px;background:linear-gradient(#7484f6 0,#6c78d4 20%,#6a74cc 30%,#7888ee 60%,#7888ee 88%,#5e6cc4 100%)"></div>
<div class="a" style="left:1247px;top:89px;width:18px;height:19px;background:#b0b8fc"></div>
<div class="t" style="left:1247px;top:90px;width:18px;height:19px;line-height:20px;text-align:center">1</div>
<svg class="a" style="left:1230px;top:89px" width="60" height="19" viewBox="1230 89 60 19">
 <g fill="#3c3c3c"><rect x="1234" y="98" width="3" height="1" opacity="0.6"/><rect x="1237" y="97" width="1.3" height="3"/><rect x="1238" y="97.8" width="2.5" height="1.5"/><rect x="1240.3" y="96.8" width="1.8" height="3.4" rx="0.8"/></g>
 <rect x="1271.5" y="95.5" width="5.5" height="5.5" fill="#7080d8" stroke="#303050" stroke-width="1.2"/>
 <rect x="1273.5" y="97.5" width="1.5" height="1.5" fill="#fff" stroke="#303050" stroke-width="0.5"/>
 <path d="M1274.25 92 V95 M1274.25 101.5 V104.5 M1269 98.25 H1271.5 M1277 98.25 H1280" stroke="#303050" stroke-width="1"/>
</svg>
<svg class="a" style="left:1230px;top:108px" width="691" height="439" viewBox="1230 108 691 439">
 <g fill="none" stroke="#ff00ff" stroke-width="1.2">
  <rect x="1370.5" y="122.5" width="410" height="410" shape-rendering="crispEdges"/>
  <rect x="1438.5" y="190.5" width="274" height="274" shape-rendering="crispEdges"/>
  <path d="M1370.5 122.5 L1438.5 190.5 M1780.5 122.5 L1712.5 190.5 M1370.5 532.5 L1438.5 464.5 M1780.5 532.5 L1712.5 464.5"/>
 </g>
 <path d="M1571 507 h3 v11 h-1 v7 h-2 z" fill="#fff"/>
</svg>
<div class="ax" style="left:1568px;top:126px;font-size:27px">S</div>
<div class="ax" style="left:1380px;top:315px;font-size:25px">R</div>
<div class="ax" style="left:1570px;top:317px;font-size:20px">P</div>
<div class="ax" style="left:1756px;top:314px;font-size:26px">L</div>
<svg class="a" style="left:1886px;top:1008px" width="36" height="32" viewBox="1886 1008 36 32">
 <defs><radialGradient id="err" cx="0.4" cy="0.35" r="0.7"><stop offset="0" stop-color="#f04040"/><stop offset="0.7" stop-color="#c01010"/><stop offset="1" stop-color="#900808"/></radialGradient></defs>
 <rect x="1889.5" y="1010.5" width="30" height="27" rx="3" fill="#fff" stroke="#8a8a8a" stroke-width="1"/>
 <circle cx="1904" cy="1024" r="11.5" fill="url(#err)" stroke="#b8b8b8" stroke-width="1.3"/>
 <path d="M1899 1019 L1909 1029 M1909 1019 L1899 1029" stroke="#e8e8e8" stroke-width="2.8"/>
 <rect x="1920.5" y="1028" width="1.5" height="12" fill="#222"/>
</svg>
</body></html>
